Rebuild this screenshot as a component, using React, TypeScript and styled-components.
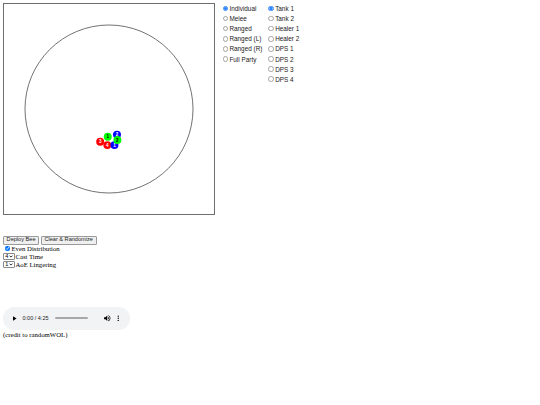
import React, { useState } from 'react';
import styled, { createGlobalStyle } from 'styled-components';

// Reference is a 1280-wide page shrunk to 540, so every size here is the
// original size times ~0.42.
const GlobalStyle = createGlobalStyle`
    body {
        margin: 3px;
        font-family: "Liberation Serif", "Times New Roman", serif;
        font-size: 6.75px;
        color: #000;
        background: #fff;
    }
`;

const TopRow = styled.div`
    display: flex;
    align-items: flex-start;
`;

const Arena = styled.div`
    width: 210px;
    height: 210px;
    border: 1px solid #6f6f6f;
    flex: none;

    svg {
        display: block;
    }
`;

const RolePanel = styled.div`
    display: flex;
    gap: 3.8px;
    margin-left: 5.5px;
    margin-top: 0.5px;
`;

const RadioColumn = styled.div`
    display: flex;
    flex-direction: column;
`;

const RadioRow = styled.label`
    display: flex;
    align-items: center;
    height: 10.1px;
    font-family: "Liberation Sans", Arial, sans-serif;
    font-size: 6.4px;
    white-space: nowrap;
    color: #1a1a1a;
`;

const Radio = styled.input.attrs({ type: 'radio' })`
    appearance: none;
    box-sizing: border-box;
    width: 5.5px;
    height: 5.5px;
    margin: 0 1.3px 0 2.1px;
    border-radius: 50%;
    border: 0.6px solid #a3a3a3;
    background: #fff;

    &:checked {
        border-color: #2f86ff;
        background: radial-gradient(circle, #2f86ff 0 55%, #8fbcff 56% 100%);
    }
`;

const Controls = styled.div`
    margin-top: 20.5px;
`;

const ButtonRow = styled.div`
    display: flex;
    gap: 1.7px;
    height: 9px;
`;

const Button = styled.button`
    font-family: "Liberation Sans", Arial, sans-serif;
    font-size: 5.6px;
    height: 9px;
    padding: 0 2.6px;
    border: 0.6px solid #9a9a9a;
    border-radius: 1px;
    background: #efefef;
    color: #222;
    line-height: 1;
`;

const Line = styled.div`
    display: flex;
    align-items: center;
    height: 8px;
`;

const Checkbox = styled.input.attrs({ type: 'checkbox' })`
    width: 5.5px;
    height: 5.5px;
    margin: 0 1.3px 0 1.7px;
    accent-color: #0075ff;
`;

const SelectBox = styled.span`
    position: relative;
    display: inline-flex;
    align-items: center;
    margin-right: 0.4px;
`;

const Select = styled.select`
    appearance: none;
    font-family: "Liberation Sans", Arial, sans-serif;
    font-size: 5.6px;
    height: 7.5px;
    width: 12px;
    padding: 0 0 0 1.3px;
    border: 0.6px solid #8a8a8a;
    border-radius: 1px;
    background: #fff;
    color: #000;
    line-height: 1;
`;

const Chevron = styled.svg`
    position: absolute;
    right: 1.6px;
    top: 2.4px;
    pointer-events: none;
`;

const AudioBar = styled.div`
    margin-top: 38px;
    width: 127px;
    height: 23px;
    border-radius: 11.5px;
    background: #f1f3f4;
    display: flex;
    align-items: center;
    padding: 0 7.5px 0 7px;
    box-sizing: border-box;
    font-family: "Liberation Sans", Arial, sans-serif;
    font-size: 5.5px;
    color: #202124;
`;

const IconSlot = styled.span<{ gap?: number }>`
    width: 9px;
    height: 9px;
    display: flex;
    align-items: center;
    justify-content: center;
    flex: none;
    margin-left: ${(p) => p.gap || 0}px;
`;

const TimeText = styled.span`
    margin-left: 3.5px;
    white-space: nowrap;
`;

const Track = styled.div`
    margin-left: 6.5px;
    width: 33px;
    height: 1.6px;
    border-radius: 1px;
    background: #a8a8a8;
    flex: none;
`;

const Spacer = styled.div`
    flex: 1;
`;

const Credit = styled.div`
    margin-top: 1px;
`;

const modes = ['Individual', 'Melee', 'Ranged', 'Ranged (L)', 'Ranged (R)', 'Full Party'];
const roles = ['Tank 1', 'Tank 2', 'Healer 1', 'Healer 2', 'DPS 1', 'DPS 2', 'DPS 3', 'DPS 4'];

type Dot = { x: number; y: number; fill: string; text: string; label: string };

// positions in arena units (500 x 500)
const dots: Dot[] = [
    { x: 229, y: 328, fill: '#ff0000', text: '#fff', label: '3' },
    { x: 246, y: 336, fill: '#ff0000', text: '#fff', label: '4' },
    { x: 269, y: 311, fill: '#0000ff', text: '#fff', label: '2' },
    { x: 263, y: 336, fill: '#0000ff', text: '#fff', label: '1' },
    { x: 247, y: 316, fill: '#00ff00', text: '#000', label: '1' },
    { x: 270, y: 324, fill: '#00ff00', text: '#000', label: '2' },
];

const ArenaDrawing = () => (
    <svg width="210" height="210" viewBox="0 0 500 500">
        <circle cx="250" cy="250" r="200" fill="none" stroke="#444" strokeWidth="1.8" />
        {dots.map((d, i) => (
            <g key={i}>
                <circle cx={d.x} cy={d.y} r="9.5" fill={d.fill} />
                <text
                    x={d.x}
                    y={d.y + 4}
                    textAnchor="middle"
                    fontSize="11"
                    fontWeight="bold"
                    fontFamily="Liberation Sans, Arial, sans-serif"
                    fill={d.text}
                >
                    {d.label}
                </text>
            </g>
        ))}
    </svg>
);

const SmallSelect = ({ value }: { value: string }) => (
    <SelectBox>
        <Select defaultValue={value}>
            {['1', '2', '3', '4', '5'].map((n) => (
                <option key={n}>{n}</option>
            ))}
        </Select>
        <Chevron width="4" height="3" viewBox="0 0 8 6">
            <path d="M1 1.2l3 3 3-3" fill="none" stroke="#000" strokeWidth="1.6" />
        </Chevron>
    </SelectBox>
);

export default function App() {
    const [mode, setMode] = useState('Individual');
    const [role, setRole] = useState('Tank 1');
    const [even, setEven] = useState(true);

    return (
        <>
            <GlobalStyle />
            <TopRow>
                <Arena>
                    <ArenaDrawing />
                </Arena>
                <RolePanel>
                    <RadioColumn>
                        {modes.map((m) => (
                            <RadioRow key={m}>
                                <Radio name="mode" checked={mode === m} onChange={() => setMode(m)} />
                                {m}
                            </RadioRow>
                        ))}
                    </RadioColumn>
                    <RadioColumn>
                        {roles.map((r) => (
                            <RadioRow key={r}>
                                <Radio name="role" checked={role === r} onChange={() => setRole(r)} />
                                {r}
                            </RadioRow>
                        ))}
                    </RadioColumn>
                </RolePanel>
            </TopRow>
            <Controls>
                <ButtonRow>
                    <Button>Deploy Bee</Button>
                    <Button>Clear &amp; Randomize</Button>
                </ButtonRow>
                <Line>
                    <Checkbox checked={even} onChange={() => setEven(!even)} />
                    Even Distribution
                </Line>
                <Line>
                    <SmallSelect value="4" />
                    Cast Time
                </Line>
                <Line>
                    <SmallSelect value="1" />
                    AoE Lingering
                </Line>
            </Controls>
            <AudioBar>
                <IconSlot>
                    <svg width="9" height="9" viewBox="0 0 24 24">
                        <path d="M8 6v12l9.5-6z" fill="#000" />
                    </svg>
                </IconSlot>
                <TimeText>0:00 / 4:25</TimeText>
                <Track />
                <Spacer />
                <IconSlot>
                    <svg width="8.5" height="8.5" viewBox="0 0 24 24">
                        <path
                            d="M3 9v6h4l5 5V4L7 9H3zm13.5 3c0-1.77-1.02-3.29-2.5-4.03v8.05c1.48-.73 2.5-2.25 2.5-4.02zM14 3.230v2.06c2.89.86 5 3.54 5 6.71s-2.11 5.850-5 6.71v2.06c4.01-.91 7-4.49 7-8.77s-2.99-7.86-7-8.77z"
                            fill="#000"
                        />
                    </svg>
                </IconSlot>
                <IconSlot gap={1.5}>
                    <svg width="8.5" height="8.5" viewBox="0 0 24 24">
                        <path
                            d="M12 8c1.1 0 2-.9 2-2s-.9-2-2-2-2 .9-2 2 .9 2 2 2zm0 2c-1.1 0-2 .9-2 2s.9 2 2 2 2-.9 2-2-.9-2-2-2zm0 6c-1.1 0-2 .9-2 2s.9 2 2 2 2-.9 2-2-.9-2-2-2z"
                            fill="#000"
                        />
                    </svg>
                </IconSlot>
            </AudioBar>
            <Credit>(credit to randomWOL)</Credit>
        </>
    );
}
